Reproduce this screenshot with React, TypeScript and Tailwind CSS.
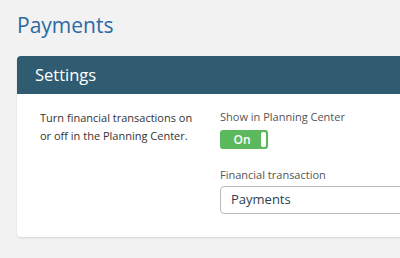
import React from "react";

export default function App() {
  return (
    <div className="w-[400px] h-[258px] overflow-hidden bg-[#f2f2f2] pl-[17px] pt-[10px]" style={{ fontFamily: '"Open Sans", sans-serif' }}>
      <h1 className="text-[21px] leading-[30px] text-[#2c6aa4] font-normal">Payments</h1>
      <div className="mt-[16px] w-[420px] bg-white rounded-[4px] shadow-[0_1px_2px_rgba(0,0,0,0.12)] overflow-hidden">
        <div className="h-[38px] bg-[#2f5c70] pl-[18px] flex items-center">
          <span className="text-white text-[16.5px] leading-none">Settings</span>
        </div>
        <div className="flex h-[143px] pt-[15px]">
          <div className="w-[203px] pl-[23px] pr-[25px] text-[11px] leading-[18px] text-[#333]">
            Turn financial transactions on or off in the Planning Center.
          </div>
          <div className="flex flex-col">
            <div className="text-[11px] leading-[16px] text-[#555]">Show in Planning Center</div>
            <div className="mt-[5px] w-[48px] h-[19px] rounded-[3px] bg-[#5cb85c] flex items-center pr-[2px]">
              <span className="flex-1 text-center text-white text-[12px] font-semibold leading-none pl-[3px]">On</span>
              <span className="w-[5px] h-[15px] bg-white rounded-[2px]" />
            </div>
            <div className="mt-[17px] text-[11px] leading-[17px] text-[#555]">Financial transaction</div>
            <div className="mt-[3px] w-[200px] h-[28px] border border-[#bbb] rounded-[4px] flex items-center pl-[10px] text-[13px] text-[#2f3e4e]">
              Payments
            </div>
          </div>
        </div>
      </div>
    </div>
  );
}
